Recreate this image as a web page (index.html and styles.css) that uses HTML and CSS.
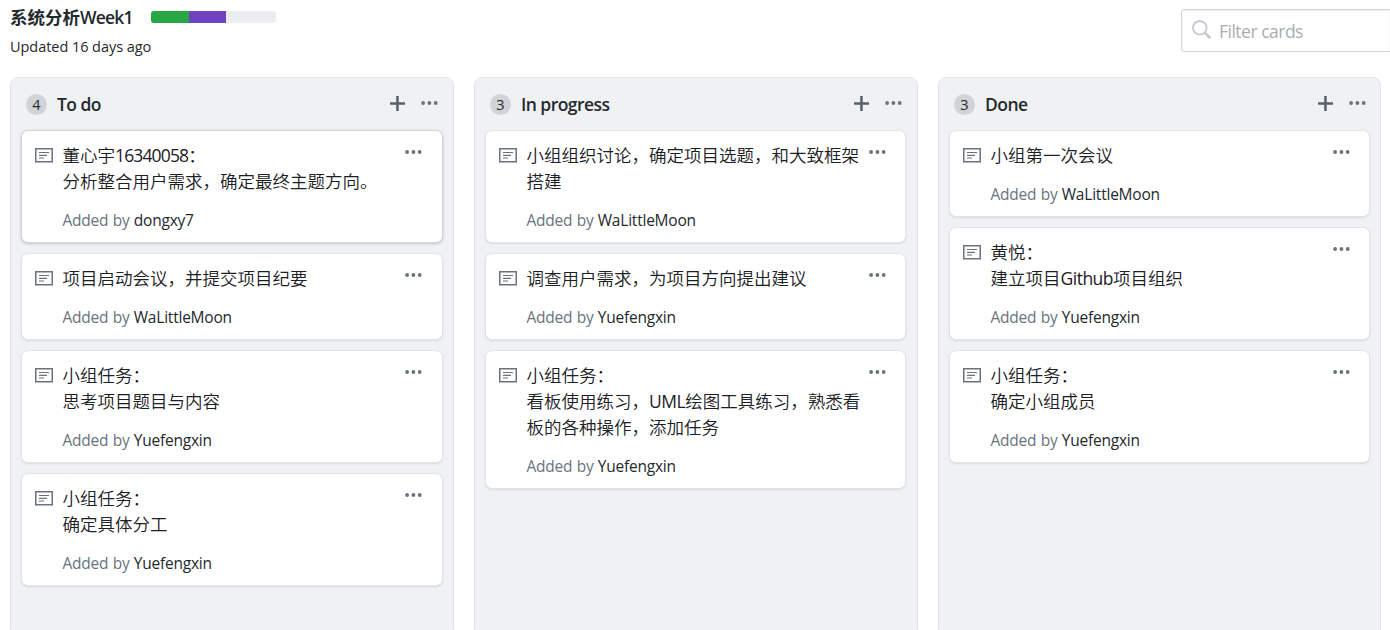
FILE: index.html
```html
<!DOCTYPE html>
<html lang="zh-CN">
<head>
<meta charset="utf-8">
<title>系统分析Week1</title>
<link rel="stylesheet" href="styles.css">
</head>
<body>
<svg width="0" height="0" class="defs">
  <symbol id="note" viewBox="0 0 18 15"><path d="M.75.75h16.5v13H.75z" fill="none" stroke="#6a737d" stroke-width="1.5"/><path d="M4 4.5h10M4 7.3h8M4 10h5" stroke="#6a737d" stroke-width="1.2"/></symbol>
  <symbol id="dots" viewBox="0 0 17 4"><circle cx="2.1" cy="2" r="1.9"/><circle cx="8.4" cy="2" r="1.9"/><circle cx="14.7" cy="2" r="1.9"/></symbol>
  <symbol id="plus" viewBox="0 0 15 15"><path d="M6.2 0h2.5v6.2H15v2.5H8.7V15H6.2V8.7H0V6.2h6.2z"/></symbol>
</svg>
<header class="header">
  <div class="info">
    <div class="title-row"><h1 class="title">系统分析<span class="title-latin">Week1</span></h1><div class="progress"><span class="done"></span><span class="doing"></span></div></div>
    <div class="updated">Updated 16 days ago</div>
  </div>
  <div class="filter"><svg class="search" viewBox="0 0 20 20"><circle cx="7.8" cy="7.8" r="6.8" fill="none" stroke="#c6cbd1" stroke-width="1.8"/><path d="M12.8 12.8l5.6 5.4" stroke="#c6cbd1" stroke-width="2.6"/></svg><span>Filter cards</span></div>
</header>
<main class="board">
  <section class="column">
    <div class="column-head"><span class="count">4</span><h2 class="name">To do</h2><svg class="plus"><use href="#plus"/></svg><svg class="dots"><use href="#dots"/></svg></div>
    <article class="card active"><svg class="note"><use href="#note"/></svg><div class="body"><p class="text">董心宇<span class="num">16340058</span>：<br>分析整合用户需求，确定最终主题方向。</p><p class="by">Added by <b>dongxy7</b></p></div><svg class="dots"><use href="#dots"/></svg></article>
    <article class="card"><svg class="note"><use href="#note"/></svg><div class="body"><p class="text">项目启动会议，并提交项目纪要</p><p class="by">Added by <b>WaLittleMoon</b></p></div><svg class="dots"><use href="#dots"/></svg></article>
    <article class="card"><svg class="note"><use href="#note"/></svg><div class="body"><p class="text">小组任务：<br>思考项目题目与内容</p><p class="by">Added by <b>Yuefengxin</b></p></div><svg class="dots"><use href="#dots"/></svg></article>
    <article class="card"><svg class="note"><use href="#note"/></svg><div class="body"><p class="text">小组任务：<br>确定具体分工</p><p class="by">Added by <b>Yuefengxin</b></p></div><svg class="dots"><use href="#dots"/></svg></article>
  </section>
  <section class="column">
    <div class="column-head"><span class="count">3</span><h2 class="name">In progress</h2><svg class="plus"><use href="#plus"/></svg><svg class="dots"><use href="#dots"/></svg></div>
    <article class="card"><svg class="note"><use href="#note"/></svg><div class="body"><p class="text">小组组织讨论，确定项目选题，和大致框架<br>搭建</p><p class="by">Added by <b>WaLittleMoon</b></p></div><svg class="dots"><use href="#dots"/></svg></article>
    <article class="card"><svg class="note"><use href="#note"/></svg><div class="body"><p class="text">调查用户需求，为项目方向提出建议</p><p class="by">Added by <b>Yuefengxin</b></p></div><svg class="dots"><use href="#dots"/></svg></article>
    <article class="card"><svg class="note"><use href="#note"/></svg><div class="body"><p class="text">小组任务：<br>看板使用练习，<span class="latin">UML</span>绘图工具练习，熟悉看<br>板的各种操作，添加任务</p><p class="by">Added by <b>Yuefengxin</b></p></div><svg class="dots"><use href="#dots"/></svg></article>
  </section>
  <section class="column">
    <div class="column-head"><span class="count">3</span><h2 class="name">Done</h2><svg class="plus"><use href="#plus"/></svg><svg class="dots"><use href="#dots"/></svg></div>
    <article class="card"><svg class="note"><use href="#note"/></svg><div class="body"><p class="text">小组第一次会议</p><p class="by">Added by <b>WaLittleMoon</b></p></div><svg class="dots"><use href="#dots"/></svg></article>
    <article class="card"><svg class="note"><use href="#note"/></svg><div class="body"><p class="text">黄悦：<br>建立项目<span class="latin">Github</span>项目组织</p><p class="by">Added by <b>Yuefengxin</b></p></div><svg class="dots"><use href="#dots"/></svg></article>
    <article class="card"><svg class="note"><use href="#note"/></svg><div class="body"><p class="text">小组任务：<br>确定小组成员</p><p class="by">Added by <b>Yuefengxin</b></p></div><svg class="dots"><use href="#dots"/></svg></article>
  </section>
</main>
</body>
</html>
```
FILE: styles.css
```css
* { box-sizing: border-box; }
body { margin: 0; height: 630px; overflow: hidden; background: #fff; color: #24292e; font-family: "Open Sans", "Noto Sans CJK SC", sans-serif; }
h1, h2, p { margin: 0; }
svg { display: block; flex: none; }
.defs { position: absolute; }
.header { display: flex; height: 77px; padding: 4px 0 0 10px; justify-content: space-between; overflow: hidden; }
.title-row { display: flex; height: 26px; align-items: center; }
.title { width: 141px; font-size: 17.5px; line-height: 26px; font-weight: 700; white-space: nowrap; }
.title-latin { font-weight: 600; letter-spacing: -.8px; }
.progress { display: flex; width: 125px; height: 12px; border-radius: 3px; overflow: hidden; background: #eaecef; }
.done { width: 38px; background: #28a745; }
.doing { width: 37px; background: #6f42c1; }
.updated { font-size: 14.5px; line-height: 22px; margin-top: 6px; letter-spacing: -.05px; white-space: nowrap; }
.filter { display: flex; width: 209px; height: 43px; margin-top: 5px; padding: 10px 0 0 10px; gap: 7px; border: 1px solid #d1d5da; border-right: 0; border-radius: 4px 0 0 4px; box-shadow: inset 0 1px 2px rgba(27,31,35,.075); color: #a8adb3; font-size: 17.5px; line-height: 22px; letter-spacing: -.5px; white-space: nowrap; }
.search { width: 20px; height: 20px; }
.board { display: grid; grid-template-columns: 444px 444px 443px; gap: 20px; height: 560px; padding-left: 10px; }
.column { display: flex; flex-direction: column; gap: 10px; padding: 0 10px; background: #eff1f3; border: 1px solid #e1e4e8; border-radius: 8px; }
.column:nth-child(2) { padding-right: 11px; }
.column-head { display: flex; height: 42px; padding: 14px 4px 0 5px; fill: #586069; }
.column:first-child .column-head { padding-right: 5px; }
.count { width: 21px; height: 21px; margin-top: 2px; border-radius: 50%; background: #d1d4d7; font-size: 14.5px; line-height: 21px; text-align: center; }
.name { flex: 1; margin-left: 10px; font-size: 17.5px; line-height: 24px; font-weight: 600; letter-spacing: -.55px; white-space: nowrap; }
.plus { width: 15px; height: 15px; margin: 4px 16px 0 0; }
.dots { width: 17px; height: 4px; margin-top: 9px; fill: #6a737d; }
.card { display: flex; padding: 11px 19.5px 9px 13px; background: #fff; border: 1px solid #e1e4e8; border-radius: 7px; box-shadow: 0 1px 2px rgba(27,31,35,.1); }
.column:first-child .card { padding-right: 20.5px; }
.active { border-color: #d1d5da; box-shadow: 0 1px 3px rgba(27,31,35,.2); }
.note { width: 18px; height: 15px; margin: 6px 9.5px 0 0; }
.body { flex: 1; width: 0; white-space: nowrap; }
.text { font-size: 17.5px; line-height: 26px; font-weight: 350; color: #1b2025; }
.num { font-weight: 400; letter-spacing: -.85px; }
.latin { font-weight: 400; letter-spacing: -.5px; }
.by { margin-top: 14px; height: 25px; font-size: 15.5px; line-height: 24px; color: #6a737d; letter-spacing: -.22px; word-spacing: .5px; }
.by b { font-weight: 400; color: #24292e; }
.card .dots { margin-top: 7.5px; }
```
